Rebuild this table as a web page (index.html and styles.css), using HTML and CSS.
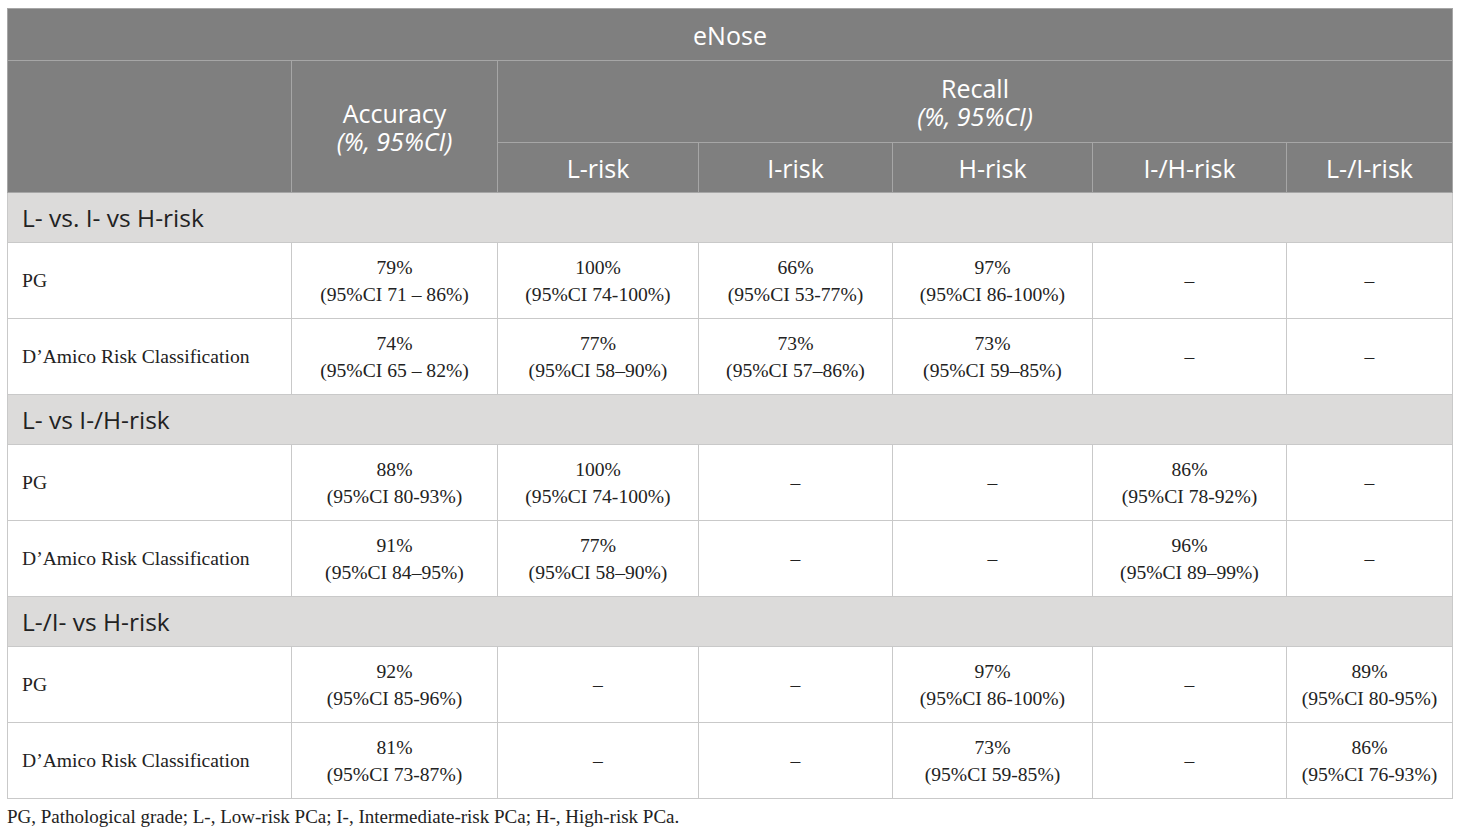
FILE: index.html
```html
<!DOCTYPE html>
<html lang="en">
<head>
    <meta charset="UTF-8">
    <title>eNose results</title>
    <link rel="stylesheet" href="styles.css">
</head>
<body>

<table class="results">
    <colgroup>
        <col style="width: 284px">
        <col style="width: 206px">
        <col style="width: 201px">
        <col style="width: 194px">
        <col style="width: 200px">
        <col style="width: 194px">
        <col style="width: 166px">
    </colgroup>
    <thead>
        <tr class="h1">
            <th colspan="7">eNose</th>
        </tr>
        <tr class="h2">
            <th rowspan="2"></th>
            <th rowspan="2">Accuracy<br><em>(%, 95%CI)</em></th>
            <th colspan="5">Recall<br><em>(%, 95%CI)</em></th>
        </tr>
        <tr class="h3">
            <th>L-risk</th>
            <th>I-risk</th>
            <th>H-risk</th>
            <th>I-/H-risk</th>
            <th>L-/I-risk</th>
        </tr>
    </thead>
    <tbody>
        <tr class="section"><td colspan="7">L- vs. I- vs H-risk</td></tr>
        <tr>
            <td class="label">PG</td>
            <td>79%<br>(95%CI 71 – 86%)</td>
            <td>100%<br>(95%CI 74-100%)</td>
            <td>66%<br>(95%CI 53-77%)</td>
            <td>97%<br>(95%CI 86-100%)</td>
            <td>–</td>
            <td>–</td>
        </tr>
        <tr>
            <td class="label">D’Amico Risk Classification</td>
            <td>74%<br>(95%CI 65 – 82%)</td>
            <td>77%<br>(95%CI 58–90%)</td>
            <td>73%<br>(95%CI 57–86%)</td>
            <td>73%<br>(95%CI 59–85%)</td>
            <td>–</td>
            <td>–</td>
        </tr>
        <tr class="section"><td colspan="7">L- vs I-/H-risk</td></tr>
        <tr>
            <td class="label">PG</td>
            <td>88%<br>(95%CI 80-93%)</td>
            <td>100%<br>(95%CI 74-100%)</td>
            <td>–</td>
            <td>–</td>
            <td>86%<br>(95%CI 78-92%)</td>
            <td>–</td>
        </tr>
        <tr>
            <td class="label">D’Amico Risk Classification</td>
            <td>91%<br>(95%CI 84–95%)</td>
            <td>77%<br>(95%CI 58–90%)</td>
            <td>–</td>
            <td>–</td>
            <td>96%<br>(95%CI 89–99%)</td>
            <td>–</td>
        </tr>
        <tr class="section"><td colspan="7">L-/I- vs H-risk</td></tr>
        <tr>
            <td class="label">PG</td>
            <td>92%<br>(95%CI 85-96%)</td>
            <td>–</td>
            <td>–</td>
            <td>97%<br>(95%CI 86-100%)</td>
            <td>–</td>
            <td>89%<br>(95%CI 80-95%)</td>
        </tr>
        <tr>
            <td class="label">D’Amico Risk Classification</td>
            <td>81%<br>(95%CI 73-87%)</td>
            <td>–</td>
            <td>–</td>
            <td>73%<br>(95%CI 59-85%)</td>
            <td>–</td>
            <td>86%<br>(95%CI 76-93%)</td>
        </tr>
    </tbody>
</table>

<p class="note">PG, Pathological grade; L-, Low-risk PCa; I-, Intermediate-risk PCa; H-, High-risk PCa.</p>

</body>
</html>
```

FILE: styles.css
```css
body {
    margin: 0;
    padding: 8px 7px;
    background: #fff;
    font-family: "Liberation Serif", "Times New Roman", serif;
    color: #222;
}
.results {
    border-collapse: collapse;
    table-layout: fixed;
    width: 1446px;
}
.results th,
.results td {
    border: 1px solid #c9c9c9;
    padding: 0 6px;
    text-align: center;
    vertical-align: middle;
}
.results th {
    background-color: #7f7f7f;
    color: #fff;
    font-family: "Open Sans", Lato, sans-serif;
    font-weight: normal;
    font-size: 25px;
    line-height: 28px;
    border-color: #a6a6a6;
}
.results th em {
    font-style: italic;
}
.h1 th {
    height: 51px;
}
.h2 th {
    height: 81px;
}
.h3 th {
    height: 49px;
}
.results td {
    font-size: 19.6px;
    line-height: 27px;
    height: 75px;
    white-space: nowrap;
}
.results td.label {
    text-align: left;
    padding-left: 14px;
}
.results .section td {
    background-color: #dcdbda;
    font-family: "Open Sans", Lato, sans-serif;
    font-size: 24.5px;
    text-align: left;
    height: 49px;
    padding-left: 14px;
    color: #222;
}
.note {
    margin: 6px 0 0;
    font-size: 19px;
    line-height: 24px;
    color: #222;
}
```
